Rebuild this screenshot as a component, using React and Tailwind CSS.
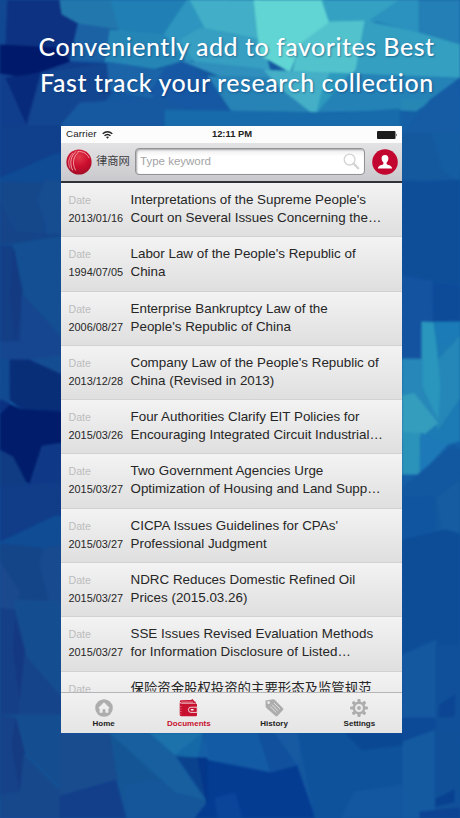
import { useId } from "react";

const documents = [
  { date: "2013/01/16", lines: ["Interpretations of the Supreme People's", "Court on Several Issues Concerning the…"] },
  { date: "1994/07/05", lines: ["Labor Law of the People's Republic of", "China"] },
  { date: "2006/08/27", lines: ["Enterprise Bankruptcy Law of the", "People's Republic of China"] },
  { date: "2013/12/28", lines: ["Company Law of the People's Republic of", "China (Revised in 2013)"] },
  { date: "2015/03/26", lines: ["Four Authorities Clarify EIT Policies for", "Encouraging Integrated Circuit Industrial…"] },
  { date: "2015/03/27", lines: ["Two Government Agencies Urge", "Optimization of Housing and Land Supp…"] },
  { date: "2015/03/27", lines: ["CICPA Issues Guidelines for CPAs'", "Professional Judgment"] },
  { date: "2015/03/27", lines: ["NDRC Reduces Domestic Refined Oil", "Prices (2015.03.26)"] },
  { date: "2015/03/27", lines: ["SSE Issues Revised Evaluation Methods", "for Information Disclosure of Listed…"] },
  { date: "", lines: ["保险资金股权投资的主要形态及监管规范"] },
];

// [points, fill] for every facet of the low-poly backdrop
const facets = [
  ["0,0 64,0 64,15 80,25 70,60 0,75", "#0d3282"],
  ["0,0 7,0 5,45 0,50", "#124792"],
  ["60,0 190,0 160,40 118,30 80,24 62,14", "#207fb4"],
  ["60,0 110,0 118,30 80,24 62,14", "#2277ac"],
  ["78,24 120,30 110,60 70,60", "#1b62a5"],
  ["187,0 160,40 118,30 130,62 210,60 230,0", "#2d95bf"],
  ["110,30 165,35 185,60 150,70 105,62", "#2586b6"],
  ["190,0 258,0 262,40 205,28", "#42aec7"],
  ["200,28 262,40 270,70 195,62 180,40", "#379fc2"],
  ["254,0 325,0 332,22 300,45 290,72 260,55", "#61d5d3"],
  ["322,0 416,0 400,20 365,22 330,24", "#35a1c2"],
  ["330,22 365,21 372,45 352,75 292,72 300,44", "#52c3cd"],
  ["365,21 410,30 460,42 460,78 355,75", "#349fc1"],
  ["400,0 419,0 419,32 370,20", "#2b92bf"],
  ["419,0 460,0 460,44 419,32", "#237fb5"],
  ["0,45 58,48 72,64 40,73 25,78 0,73", "#00196a"],
  ["0,74 25,78 70,62 108,64 90,92 70,126 0,126", "#113e8c"],
  ["6,78 40,73 26,123", "#072a7b"],
  ["42,73 108,64 112,92 85,126 28,126", "#134691"],
  ["107,62 160,70 185,60 170,90 150,98 110,90", "#1b64a8"],
  ["165,69 185,61 208,80 231,115 175,110 150,92", "#1658a4"],
  ["182,61 270,70 270,80 225,78", "#308fbc"],
  ["208,76 278,78 316,115 236,118", "#2783b6"],
  ["264,70 330,73 326,90 316,116 280,88", "#44afc7"],
  ["330,73 355,74 316,116 322,92", "#2d99bd"],
  ["350,74 460,78 420,110 318,112", "#2482b6"],
  ["80,103 160,98 230,126 60,126", "#1759a1"],
  ["165,110 345,113 402,109 460,94 460,136 165,136", "#176baa"],
  ["400,110 424,108 460,78 460,170 402,170", "#145fa5"],
  ["400,110 416,111 431,100 402,99", "#2687b5"],
  ["460,78 430,100 403,133 460,150", "#155ca5"],
  ["0,126 62,126 62,153 0,179", "#103f8c"],
  ["0,178 55,154 62,154 62,185 0,184", "#0e4b94"],
  ["0,182 44,183 38,198 48,238 15,232 0,203", "#15478b"],
  ["44,180 62,180 62,238 48,232 38,202", "#164c90"],
  ["0,203 15,232 62,235 62,246 0,246", "#154489"],
  ["0,246 62,236 62,342 28,312 12,250", "#134f92"],
  ["0,246 12,246 22,290 24,342 0,342", "#133f87"],
  ["14,250 22,294 16,340 10,300", "#143a82"],
  ["22,294 62,338 62,360 20,359", "#16468f"],
  ["0,342 22,342 22,360 0,360", "#174690"],
  ["0,358 10,360 9,403 0,400", "#124a91"],
  ["10,360 31,360 62,374 62,412 20,408 10,400", "#092e78"],
  ["31,360 62,374 62,355", "#154d92"],
  ["0,400 20,409 62,412 62,458 30,485 0,455", "#001c6a"],
  ["0,400 10,404 0,414", "#0b3080"],
  ["0,450 13,457 28,486 0,486", "#103c83"],
  ["42,446 62,443 62,485 29,486", "#0f3986"],
  ["0,486 62,482 62,516 0,542", "#103c88"],
  ["0,542 55,516 62,516 62,562 0,562", "#0f4c94"],
  ["0,544 42,548 40,565 50,602 12,600 0,562", "#154589"],
  ["44,548 62,545 62,602 49,602 40,565", "#174a8f"],
  ["0,562 20,592 14,612 0,612", "#1b498e"],
  ["14,600 62,602 62,698 26,660", "#154e90"],
  ["0,608 15,610 25,650 21,715 0,715", "#154087"],
  ["15,619 25,655 20,703 13,650", "#143982"],
  ["25,655 62,698 62,720 18,717", "#16448a"],
  ["0,715 62,715 62,790 24,752 15,720", "#144e91"],
  ["0,715 16,718 25,755 20,800 0,800", "#164289"],
  ["16,720 25,755 20,790 12,745", "#153b82"],
  ["24,754 62,792 62,818 0,818 0,795 20,792", "#17488c"],
  ["402,134 460,134 460,180 435,180 402,180", "#14599e"],
  ["432,134 460,134 460,182 442,170", "#145da2"],
  ["402,181 426,182 460,180 460,285 402,276", "#0e4e99"],
  ["402,276 432,282 434,323 422,360 402,360", "#1453a0"],
  ["433,282 460,286 460,323 433,323", "#0d4b99"],
  ["422,322 460,322 460,450 422,450", "#1c7ab4"],
  ["422,322 434,323 438,360 460,336 460,398 438,430 422,392", "#2487b8"],
  ["422,322 434,323 440,386 438,420 422,390", "#2a95bd"],
  ["434,323 460,322 460,336 437,344", "#1b7bb6"],
  ["402,359 422,359 422,387 438,421 420,435 402,396", "#2687b8"],
  ["402,396 414,393 438,423 422,436 402,438", "#349cbd"],
  ["402,432 420,434 420,475 402,475", "#2b92b9"],
  ["421,433 450,446 420,475", "#1d79b7"],
  ["448,445 460,442 460,454 402,490 402,475 420,475", "#145fa8"],
  ["402,488 452,446 460,450 460,540 402,545", "#1258a0"],
  ["402,498 434,496 434,546 402,545", "#1055a0"],
  ["437,498 460,480 460,535 442,535", "#155ca0"],
  ["402,540 445,530 460,534 460,650 436,646 402,660", "#0d4d98"],
  ["402,655 436,640 436,720 402,720", "#1458a0"],
  ["436,645 460,645 460,740 436,740", "#104f99"],
  ["440,705 455,695 454,716 439,717", "#0b4593"],
  ["402,718 435,718 435,770 402,745", "#0c4997"],
  ["402,742 435,730 435,818 402,818", "#145aa1"],
  ["435,730 460,730 460,818 435,818", "#105099"],
  ["436,799 454,790 454,802 436,806", "#084190"],
  ["420,812 460,808 460,818 420,818", "#0c4393"],
  ["60,733 118,733 118,780 60,797", "#194c8f"],
  ["60,796 116,780 126,818 60,818", "#133f8a"],
  ["110,733 150,733 207,803 195,818 127,818 118,780", "#145695"],
  ["125,785 160,780 207,803 215,818 127,818", "#15559a"],
  ["110,733 160,733 205,800 175,792", "#175f9f"],
  ["150,733 203,733 175,755", "#1c72ab"],
  ["203,733 198,758 176,755", "#1569a7"],
  ["206,733 271,773 198,758", "#155fa7"],
  ["205,733 260,733 271,773 210,758", "#145ba5"],
  ["258,733 276,733 298,766 271,773", "#10509c"],
  ["275,733 302,733 298,766", "#175aa2"],
  ["196,758 271,773 297,766 315,818 195,818 207,803", "#043c92"],
  ["177,757 198,758 207,800", "#0b428d"],
  ["198,758 207,758 207,803", "#04368a"],
  ["215,798 235,793 242,818 218,818", "#0a459a"],
  ["298,733 402,733 402,785 360,790 345,818 315,818", "#0e529c"],
  ["345,733 402,733 402,745 362,750", "#0b4894"],
  ["354,792 402,785 402,818 342,818", "#1357a0"],
];

function Backdrop() {
  return (
    <svg className="absolute inset-0" width="460" height="818" viewBox="0 0 460 818">
      <rect width="460" height="818" fill="#1458a0" />
      <g className="blur-[0.8px]">
        {facets.map(([points, fill], i) => (
          <polygon key={i} points={points} fill={fill} stroke={fill} strokeWidth="0.8" />
        ))}
      </g>
    </svg>
  );
}

function LogoBall() {
  const id = useId();
  return (
    <svg width="26" height="26" viewBox="0 0 26 26">
      <defs>
        <radialGradient id={id} cx="0.5" cy="0.3" r="0.75">
          <stop offset="0" stopColor="#e23a4b" />
          <stop offset="0.5" stopColor="#cc0f2e" />
          <stop offset="1" stopColor="#9d0b25" />
        </radialGradient>
      </defs>
      <circle cx="13" cy="13" r="12.6" fill={`url(#${id})`} />
      <g fill="none" stroke="#f5a6ac" strokeLinecap="round">
        <path d="M10 2.5C4.5 7 3.4 14 6.4 21" strokeWidth="1" />
        <path d="M12.5 3C7 7.5 6 14.5 9.4 21" strokeWidth="0.9" />
        <path d="M6.5 4.5C2 9.5 1.8 14.5 4 19" strokeWidth="0.8" />
        <path d="M12 2.5C17.5 2.2 21 4.8 23 8.8" strokeWidth="0.9" />
      </g>
    </svg>
  );
}

function StatusBar() {
  return (
    <div className="grid h-[17px] shrink-0 grid-cols-3 items-center bg-[#fcfcfd] pl-[5px] pr-[4px] text-[9.8px] text-[#222]">
      <div className="flex items-center gap-[5px]">
        <span className="tracking-[0.1px]">Carrier</span>
        <svg width="11" height="8" viewBox="0 0 11 8" fill="none" stroke="#222" strokeWidth="1.4">
          <path d="M0.7 2.8Q5.5-1.3 10.3 2.8" />
          <path d="M2.5 4.8Q5.5 2.2 8.5 4.8" />
          <path d="M4 6L5.5 7.7L7 6Q5.5 4.9 4 6Z" fill="#222" stroke="none" />
        </svg>
      </div>
      <span className="text-center text-[9.4px] font-bold">12:11 PM</span>
      <svg className="justify-self-end" width="21" height="8" viewBox="0 0 21 8" fill="#1c1c1c">
        <rect width="18.5" height="8" rx="1" />
        <path d="M19.2 2.6Q20.7 4 19.2 5.4Z" />
      </svg>
    </div>
  );
}

function Header() {
  return (
    <div className="flex h-[40px] shrink-0 items-center border-b-2 border-[#30323a] bg-linear-to-b from-[#e3e3e5] to-[#c9c9cd] pb-[1px] pl-[5px] pr-[4px]">
      <LogoBall />
      <span className="ml-[4px] w-[35px] whitespace-nowrap text-[11.3px] text-[#3d3d42]">律商网</span>
      <div className="ml-[4px] flex h-[27px] w-[230px] items-center justify-between rounded-[4px] border border-[#929296] bg-linear-to-b from-[#eeeeef] to-white to-30% pl-[4px] pr-[4px] shadow-[inset_1px_1px_2px_#a4a4a8]">
        <span className="text-[11.5px] text-[#a3a3a5]">Type keyword</span>
        <svg width="17" height="17" viewBox="0 0 17 17" fill="none" stroke="#d3d3d3">
          <circle cx="6.6" cy="6.6" r="5.4" strokeWidth="1.3" />
          <path d="M10.6 10.6L15.2 15.2" strokeWidth="2.3" strokeLinecap="round" />
        </svg>
      </div>
      <svg className="ml-auto" width="26" height="26" viewBox="0 0 26 26">
        <circle cx="13" cy="13" r="12.8" fill="#c3062f" />
        <path
          d="M13 5.9c-2.4 0-3.5 1.6-3.4 3.7.1 1.6.8 3 1.8 4v1.5c-.4 1-5.2 1.2-5.5 4.3h14.2c-.3-3.1-5.1-3.3-5.5-4.3v-1.5c1-1 1.7-2.4 1.8-4 .1-2.1-1-3.7-3.4-3.7z"
          fill="#fff"
        />
      </svg>
    </div>
  );
}

function DocumentRow({ date, lines }) {
  return (
    <div className="flex h-[54.3px] shrink-0 border-b border-[#d2d2d3] bg-linear-to-b from-[#f3f3f3] to-[#dfdfdf] pl-[7.5px]">
      <div className="w-[62px] shrink-0 pt-[8px] leading-[18px]">
        <div className="text-[10.6px] text-[#bcbcbd]">Date</div>
        <div className="text-[10.9px] text-[#262626]">{date}</div>
      </div>
      <div className="pt-[8px] text-[13.4px] leading-[18px] text-[#262626]">
        {lines.map((line) => (
          <div key={line} className="whitespace-nowrap">
            {line}
          </div>
        ))}
      </div>
    </div>
  );
}

const tabs = [
  {
    label: "Home",
    icon: (
      <svg width="18" height="18" viewBox="0 0 18 18">
        <circle cx="9" cy="9" r="8.8" fill="#adadad" />
        <path d="M9 3.2L3 9.2h1.6v4.6h3v-3.5h2.8v3.5h3V9.2H15z" fill="#eee" />
      </svg>
    ),
  },
  {
    label: "Documents",
    active: true,
    icon: (
      <svg width="19" height="18" viewBox="0 0 19 18">
        <path d="M0.7 2.6Q0.7 1.5 2 1.3L12 1l1.4-1 2.2 2.5 1.1.2v2.1H3z" fill="#c8102f" />
        <path d="M0.7 3.4Q1.3 4.7 3 4.7h14.1Q18 4.7 18 5.7V16q0 1.2-1.2 1.2H2.2Q.7 17.2.7 15.8z" fill="#c8102f" />
        <path d="M2.3 3.1H14M3 4.3H16" stroke="#f4ccd2" strokeWidth="0.7" />
        <path d="M1 7.5H2.6M1 10H2.6M1 12.5H2.6M1 15H2.6" stroke="#e58d99" strokeWidth="0.6" />
        <path d="M18.2 8.2H12a2.6 2.6 0 0 0 0 5.2h6.2z" fill="#c8102f" stroke="#f1e6e8" strokeWidth="0.9" />
        <rect x="11.7" y="10" width="3" height="1.5" rx="0.7" fill="#fff" />
      </svg>
    ),
  },
  {
    label: "History",
    icon: (
      <svg width="19" height="18" viewBox="0 0 19 18">
        <path d="M.5 1.5L8.2.3Q9.2.2 10 1L18 9.2q.9.9 0 1.8L12.4 17q-.9.8-1.9 0L1.4 9Q.7 8.2.6 7.2z" fill="#adadad" />
        <circle cx="3.6" cy="3.6" r="1.3" fill="#eee" />
        <path d="M9 4L15 10M7 5.7L13 11.8M5.2 7.5L11.2 13.5" stroke="#e4e4e4" strokeWidth="0.9" />
      </svg>
    ),
  },
  {
    label: "Settings",
    icon: (
      <svg width="18" height="18" viewBox="0 0 18 18">
        <g fill="#adadad">
          {[0, 45, 90, 135].map((a) => (
            <rect key={a} x="7.4" y="0.1" width="3.2" height="17.8" rx="0.8" transform={`rotate(${a} 9 9)`} />
          ))}
          <circle cx="9" cy="9" r="6.4" />
        </g>
        <circle cx="9" cy="9" r="3.9" fill="#eaeaea" />
        <circle cx="9" cy="9" r="1.9" fill="#adadad" />
      </svg>
    ),
  },
];

function TabBar() {
  return (
    <div className="grid h-[41px] shrink-0 grid-cols-4 border-t border-[#b5b5b7] bg-linear-to-b from-[#f1f1f1] to-[#e5e5e5]">
      {tabs.map(({ label, icon, active }) => (
        <div key={label} className="flex flex-col items-center pt-[6px]">
          {icon}
          <span
            className={`mt-[1px] text-[8px] font-bold leading-[11px] ${active ? "text-[#c8102f]" : "text-[#222]"}`}
          >
            {label}
          </span>
        </div>
      ))}
    </div>
  );
}

export default function App() {
  return (
    <div className="relative h-[818px] w-[460px] overflow-hidden font-['Liberation_Sans','Noto_Sans_CJK_SC',sans-serif]">
      <Backdrop />
      <div className="relative flex h-full flex-col">
        <h1 className="flex h-[126px] shrink-0 flex-col pt-[28px] font-['Lato',sans-serif] text-[25px] font-medium leading-[36px] text-white [text-shadow:1px_1px_2px_rgba(10,50,110,0.5)]">
          <span className="ml-[38.5px] whitespace-nowrap tracking-[0.5px]">Conveniently add to favorites Best</span>
          <span className="ml-[40px] whitespace-nowrap tracking-[0.57px]">Fast track your research collection</span>
        </h1>
        <div className="ml-[61px] flex h-[607px] w-[341px] flex-col overflow-hidden bg-[#f3f3f3]">
          <StatusBar />
          <Header />
          <div className="flex min-h-0 flex-1 flex-col overflow-hidden">
            {documents.map((doc, i) => (
              <DocumentRow key={i} {...doc} />
            ))}
          </div>
          <TabBar />
        </div>
      </div>
    </div>
  );
}
